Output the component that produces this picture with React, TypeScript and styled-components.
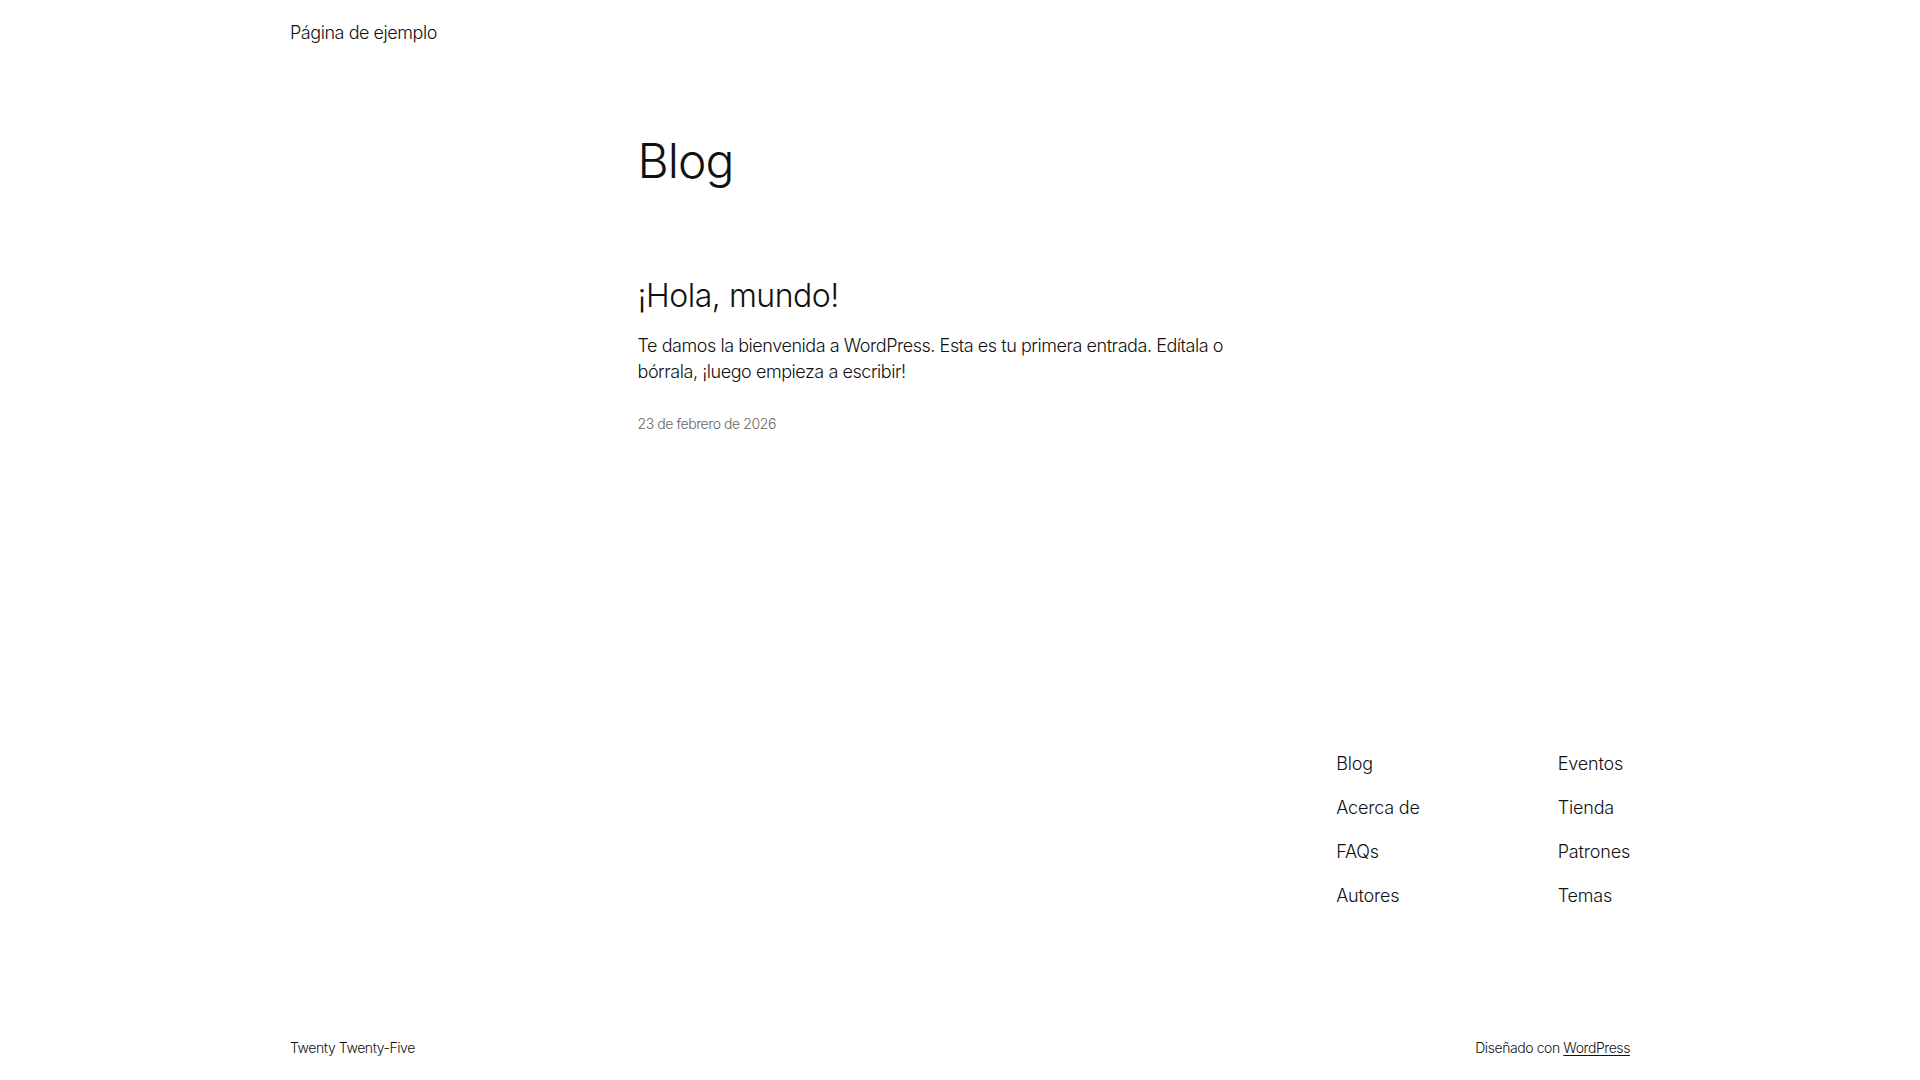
import styled, { createGlobalStyle } from "styled-components";

const GlobalStyles = createGlobalStyle`
  * {
    box-sizing: border-box;
  }
  html, body {
    margin: 0;
    padding: 0;
    background: #ffffff;
  }
  body {
    color: #111111;
    font-family: Inter, "Noto Sans", "Liberation Sans", sans-serif;
    font-weight: 300;
    -webkit-font-smoothing: antialiased;
  }
  a {
    color: inherit;
    text-decoration: none;
  }
`;

const Page = styled.div`
  min-height: 100vh;
  display: flex;
  flex-direction: column;
`;

const Wide = styled.div`
  width: 1340px;
  margin: 0 auto;
`;

const Header = styled(Wide)`
  padding: 21px 0 20px;
`;

const SiteTitle = styled.a`
  font-size: 18px;
  line-height: 24px;
  letter-spacing: -0.025em;
`;

const Main = styled.main`
  flex: 1;
  width: 645px;
  margin: 0 auto;
  padding-top: 67px;
`;

const PageTitle = styled.h1`
  margin: 0;
  font-size: 48px;
  font-weight: 300;
  line-height: 1.2;
  letter-spacing: -0.02em;
`;

const Post = styled.article`
  margin-top: 87px;
`;

const PostTitle = styled.h2`
  margin: 0;
  font-size: 32px;
  font-weight: 300;
  line-height: 1.2;
  letter-spacing: -0.015em;
`;

const Excerpt = styled.p`
  margin: 18px 0 0;
  font-size: 18px;
  line-height: 26px;
  letter-spacing: -0.025em;
`;

const PostDate = styled.time`
  display: block;
  margin-top: 29px;
  font-size: 14px;
  line-height: 20px;
  color: #666666;
  letter-spacing: -0.03em;
`;

const Footer = styled(Wide)`
  padding: 0 0 22px;
`;

const FooterNavs = styled.div`
  display: flex;
  justify-content: flex-end;
  gap: 138px;
  padding-bottom: 130px;
`;

const NavColumn = styled.nav`
  display: flex;
  flex-direction: column;
  gap: 20px;
`;

const NavLink = styled.a`
  font-size: 18px;
  line-height: 24px;
  letter-spacing: -0.01em;
`;

const Credits = styled.div`
  display: flex;
  justify-content: space-between;
  align-items: baseline;
  font-size: 14px;
  line-height: 20px;
  letter-spacing: -0.03em;
`;

const Underlined = styled.a`
  text-decoration: underline;
  text-underline-offset: 2px;
`;

const navLeft = ["Blog", "Acerca de", "FAQs", "Autores"];
const navRight = ["Eventos", "Tienda", "Patrones", "Temas"];

function App() {
  return (
    <Page>
      <GlobalStyles />
      <Header>
        <SiteTitle href="#">Página de ejemplo</SiteTitle>
      </Header>
      <Main>
        <PageTitle>Blog</PageTitle>
        <Post>
          <PostTitle>¡Hola, mundo!</PostTitle>
          <Excerpt>
            Te damos la bienvenida a WordPress. Esta es tu primera entrada.
            Edítala o bórrala, ¡luego empieza a escribir!
          </Excerpt>
          <PostDate>23 de febrero de 2026</PostDate>
        </Post>
      </Main>
      <Footer as="footer">
        <FooterNavs>
          <NavColumn>
            {navLeft.map((item) => (
              <NavLink key={item} href="#">
                {item}
              </NavLink>
            ))}
          </NavColumn>
          <NavColumn>
            {navRight.map((item) => (
              <NavLink key={item} href="#">
                {item}
              </NavLink>
            ))}
          </NavColumn>
        </FooterNavs>
        <Credits>
          <span>Twenty Twenty-Five</span>
          <span>
            Diseñado con <Underlined href="#">WordPress</Underlined>
          </span>
        </Credits>
      </Footer>
    </Page>
  );
}

export default App;
